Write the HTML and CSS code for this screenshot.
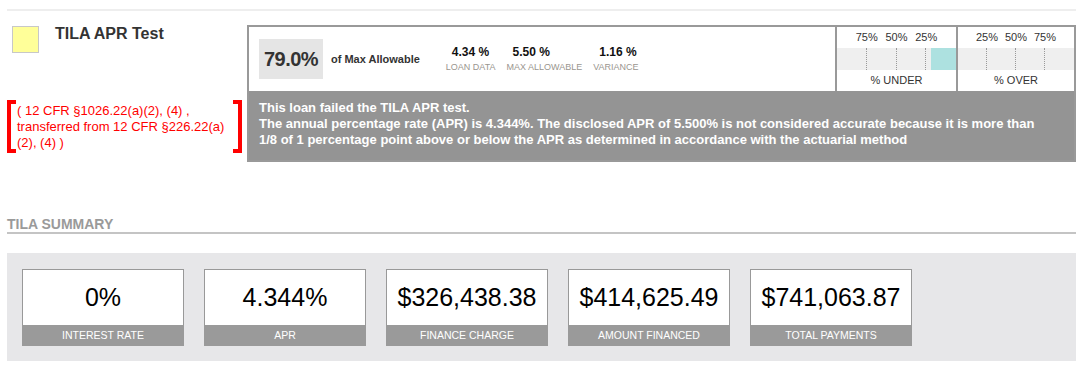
FILE: index.html
```html
<!DOCTYPE html>
<html lang="en">
<head>
    <meta charset="UTF-8">
    <meta name="viewport" content="width=device-width, initial-scale=1.0">
    <title>TILA APR Test</title>
    <link rel="stylesheet" href="styles.css">
</head>
<body>
<div class="page">
    <div class="top-rule"></div>

    <div class="test">
        <div class="test-side">
            <div class="test-head">
                <span class="swatch"></span>
                <h2 class="test-title">TILA APR Test</h2>
            </div>
            <div class="cite">
                <span class="bracket bracket-left"></span>
                <p class="cite-text">( 12 CFR §1026.22(a)(2), (4) , transferred from 12 CFR §226.22(a)<wbr>(2), (4) )</p>
                <span class="bracket bracket-right"></span>
            </div>
        </div>

        <div class="test-box">
            <div class="test-stats">
                <div class="ratio">
                    <span class="ratio-value">79.0%</span>
                    <span class="ratio-label">of Max Allowable</span>
                </div>
                <div class="figures">
                    <div class="figure">
                        <span class="figure-value">4.34 %</span>
                        <span class="figure-label">Loan Data</span>
                    </div>
                    <div class="figure">
                        <span class="figure-value">5.50 %</span>
                        <span class="figure-label">Max Allowable</span>
                    </div>
                    <div class="figure">
                        <span class="figure-value">1.16 %</span>
                        <span class="figure-label">Variance</span>
                    </div>
                </div>
                <div class="gauge gauge-under">
                    <div class="gauge-ticks"><span></span><span>75%</span><span>50%</span><span>25%</span><span></span></div>
                    <div class="gauge-bar">
                        <i></i><i></i><i></i><i></i>
                        <span class="gauge-fill" style="width: 21%;"></span>
                    </div>
                    <div class="gauge-caption">% UNDER</div>
                </div>
                <div class="gauge gauge-over">
                    <div class="gauge-ticks"><span></span><span>25%</span><span>50%</span><span>75%</span><span></span></div>
                    <div class="gauge-bar">
                        <i></i><i></i><i></i><i></i>
                    </div>
                    <div class="gauge-caption">% OVER</div>
                </div>
            </div>
            <div class="test-message">
                This loan failed the TILA APR test.<br>
                The annual percentage rate (APR) is 4.344%. The disclosed APR of 5.500% is not considered accurate because it is more than 1/8 of 1 percentage point above or below the APR as determined in accordance with the actuarial method
            </div>
        </div>
    </div>

    <h3 class="summary-title">TILA SUMMARY</h3>
    <div class="summary">
        <div class="card">
            <div class="card-value">0%</div>
            <div class="card-label">Interest Rate</div>
        </div>
        <div class="card">
            <div class="card-value">4.344%</div>
            <div class="card-label">APR</div>
        </div>
        <div class="card">
            <div class="card-value">$326,438.38</div>
            <div class="card-label">Finance Charge</div>
        </div>
        <div class="card">
            <div class="card-value">$414,625.49</div>
            <div class="card-label">Amount Financed</div>
        </div>
        <div class="card">
            <div class="card-value">$741,063.87</div>
            <div class="card-label">Total Payments</div>
        </div>
    </div>
</div>
</body>
</html>
```

FILE: styles.css
```css
body {
    font-family: 'Liberation Sans', Arial, sans-serif;
    background-color: #fff;
    color: #333;
    margin: 0;
}

.page {
    width: 1069px;
    margin-left: 7px;
    padding-top: 9px;
}

.top-rule {
    height: 2px;
    background-color: #eee;
}

.test {
    display: flex;
    margin-top: 14px;
}

.test-side {
    width: 240px;
    flex-shrink: 0;
}

.test-head {
    display: flex;
    align-items: flex-start;
    padding-left: 5px;
}

.swatch {
    width: 27px;
    height: 27px;
    box-sizing: border-box;
    margin-top: 1px;
    background-color: #ffff99;
    border: 1px solid #c8c8c8;
}

.test-title {
    margin: 0 0 0 16px;
    font-size: 16px;
    line-height: 18px;
    font-weight: bold;
    color: #333;
}

.cite {
    display: flex;
    height: 53px;
    margin-top: 47px;
}

.bracket {
    width: 9px;
    box-sizing: border-box;
    border: 4px solid #f00;
}

.bracket-left {
    border-right: none;
}

.bracket-right {
    border-left: none;
}

.cite-text {
    width: 217px;
    box-sizing: border-box;
    margin: 0;
    padding: 3px 0 0 1px;
    font-size: 13px;
    line-height: 16px;
    color: #f00;
}

.test-box {
    flex: 1;
    border: 2px solid #999;
}

.test-stats {
    display: flex;
    height: 64px;
}

.ratio {
    display: flex;
    align-items: center;
    padding-left: 10px;
}

.ratio-value {
    width: 64px;
    height: 40px;
    line-height: 40px;
    text-align: center;
    background-color: #e5e5e5;
    font-size: 20px;
    font-weight: bold;
    letter-spacing: -0.5px;
    color: #333;
}

.ratio-label {
    margin-left: 8px;
    font-size: 11px;
    font-weight: bold;
    color: #333;
}

.figures {
    display: flex;
    align-items: center;
    gap: 11px;
    margin-left: 26px;
    flex: 1;
}

.figure {
    display: flex;
    flex-direction: column;
    align-items: flex-start;
}

.figure-value {
    padding-left: 6px;
    font-size: 12px;
    line-height: 14px;
    font-weight: bold;
    color: #111;
}

.figure-label {
    margin-top: 3px;
    font-size: 9px;
    line-height: 11px;
    text-transform: uppercase;
    color: #9a968f;
}

.gauge {
    display: flex;
    flex-direction: column;
    border-left: 2px solid #999;
}

.gauge-under {
    width: 119px;
}

.gauge-over {
    width: 116px;
}

.gauge-ticks {
    display: grid;
    grid-template-columns: 1fr 2fr 2fr 2fr 1fr;
    height: 21px;
    line-height: 21px;
    font-size: 11px;
    text-align: center;
    color: #333;
}

.gauge-bar {
    position: relative;
    display: grid;
    grid-template-columns: repeat(4, 1fr);
    height: 22px;
    background-color: #efefef;
}

.gauge-bar i {
    border-right: 1px dotted #999;
}

.gauge-bar i:last-of-type {
    border-right: none;
}

.gauge-fill {
    position: absolute;
    top: 0;
    right: 0;
    bottom: 0;
    background-color: #ade1e0;
}

.gauge-caption {
    height: 21px;
    line-height: 21px;
    font-size: 11px;
    text-align: center;
    color: #333;
}

.test-message {
    padding: 9px 20px 12px 10px;
    background-color: #949494;
    color: #fff;
    font-size: 13px;
    line-height: 16px;
    font-weight: bold;
}

.summary-title {
    margin: 54px 0 0;
    font-size: 14px;
    line-height: 16px;
    font-weight: bold;
    color: #9a9a9a;
    border-bottom: 2px solid #c4c4c4;
}

.summary {
    display: flex;
    gap: 20px;
    margin-top: 19px;
    padding: 16px 15px 15px;
    background-color: #e7e7e9;
}

.card {
    width: 162px;
}

.card-value {
    height: 56px;
    box-sizing: border-box;
    line-height: 54px;
    text-align: center;
    font-size: 25px;
    color: #000;
    background-color: #fff;
    border: 1px solid #999;
    border-bottom: none;
}

.card-label {
    height: 21px;
    line-height: 21px;
    text-align: center;
    font-size: 10.5px;
    text-transform: uppercase;
    color: #fff;
    background-color: #9a9a9a;
}
```
